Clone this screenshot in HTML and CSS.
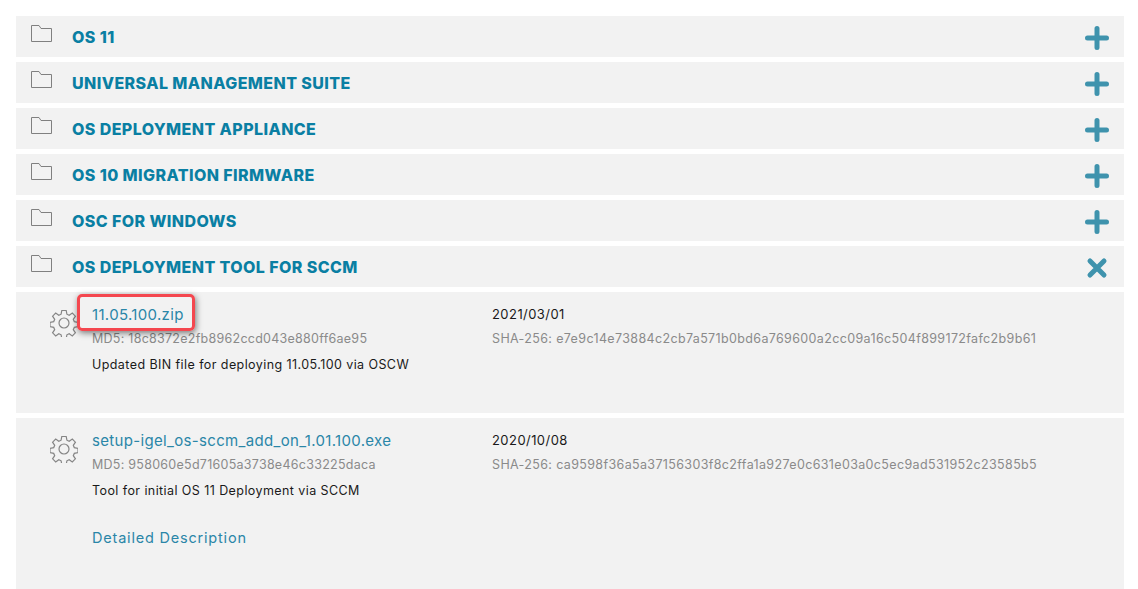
FILE: index.html
```html
<!DOCTYPE html>
<html lang="en">
<head>
<meta charset="utf-8">
<title>Downloads</title>
<link rel="stylesheet" href="styles.css">
</head>
<body>
<main class="list">
  <div class="row"><svg class="folder" viewBox="0 0 21 17"><path d="M.5 16.500V.5h7.500l2 3h10.500v13z"/></svg><h3>OS 11</h3><svg class="toggle" viewBox="0 0 24 24"><path d="M12 2.500v19M2.500 12h19"/></svg></div>
  <div class="row"><svg class="folder" viewBox="0 0 21 17"><path d="M.5 16.500V.5h7.500l2 3h10.500v13z"/></svg><h3>UNIVERSAL MANAGEMENT SUITE</h3><svg class="toggle" viewBox="0 0 24 24"><path d="M12 2.500v19M2.500 12h19"/></svg></div>
  <div class="row"><svg class="folder" viewBox="0 0 21 17"><path d="M.5 16.500V.5h7.500l2 3h10.500v13z"/></svg><h3>OS DEPLOYMENT APPLIANCE</h3><svg class="toggle" viewBox="0 0 24 24"><path d="M12 2.500v19M2.500 12h19"/></svg></div>
  <div class="row"><svg class="folder" viewBox="0 0 21 17"><path d="M.5 16.500V.5h7.500l2 3h10.500v13z"/></svg><h3>OS 10 MIGRATION FIRMWARE</h3><svg class="toggle" viewBox="0 0 24 24"><path d="M12 2.500v19M2.500 12h19"/></svg></div>
  <div class="row"><svg class="folder" viewBox="0 0 21 17"><path d="M.5 16.500V.5h7.500l2 3h10.500v13z"/></svg><h3>OSC FOR WINDOWS</h3><svg class="toggle" viewBox="0 0 24 24"><path d="M12 2.500v19M2.500 12h19"/></svg></div>
  <div class="row"><svg class="folder" viewBox="0 0 21 17"><path d="M.5 16.500V.5h7.500l2 3h10.500v13z"/></svg><h3>OS DEPLOYMENT TOOL FOR SCCM</h3><svg class="toggle" viewBox="0 0 24 24"><path d="M5 5l14 14M19 5L5 19"/></svg></div>

  <section class="file file-short">
    <svg class="gear" viewBox="0 0 28 28"><circle cx="14" cy="14" r="5"/><path d="M11.800 1.500h4.400l.7 3.700 2.300 1 3.100-2.100 3.100 3.100-2.100 3.100 1 2.300 3.700.7v4.400l-3.700.7-1 2.300 2.100 3.100-3.100 3.100-3.100-2.100-2.300 1-.7 3.700h-4.400l-.7-3.700-2.300-1-3.100 2.100-3.100-3.100 2.100-3.100-1-2.300-3.700-.7v-4.400l3.700-.7 1-2.300-2.100-3.100 3.100-3.100 3.100 2.100 2.300-1z"/></svg>
    <div class="info">
      <a class="name" href="#">11.05.100.zip</a>
      <p class="hash">MD5: 18c8372e2fb8962ccd043e880ff6ae95</p>
      <p class="desc">Updated BIN file for deploying 11.05.100 via OSCW</p>
    </div>
    <div class="meta">
      <p class="date">2021/03/01</p>
      <p class="hash">SHA-256: e7e9c14e73884c2cb7a571b0bd6a769600a2cc09a16c504f899172fafc2b9b61</p>
    </div>
    <div class="callout"></div>
  </section>

  <section class="file file-tall">
    <svg class="gear" viewBox="0 0 28 28"><circle cx="14" cy="14" r="5"/><path d="M11.800 1.500h4.400l.7 3.700 2.300 1 3.100-2.100 3.100 3.100-2.100 3.100 1 2.300 3.700.7v4.400l-3.700.7-1 2.300 2.100 3.100-3.100 3.100-3.100-2.100-2.300 1-.7 3.700h-4.400l-.7-3.700-2.300-1-3.100 2.100-3.100-3.100 2.100-3.100-1-2.300-3.700-.7v-4.400l3.700-.7 1-2.300-2.100-3.100 3.100-3.100 3.100 2.100 2.300-1z"/></svg>
    <div class="info">
      <a class="name" href="#">setup-igel_os-sccm_add_on_1.01.100.exe</a>
      <p class="hash">MD5: 958060e5d71605a3738e46c33225daca</p>
      <p class="desc">Tool for initial OS 11 Deployment via SCCM</p>
      <a class="details" href="#">Detailed Description</a>
    </div>
    <div class="meta">
      <p class="date">2020/10/08</p>
      <p class="hash">SHA-256: ca9598f36a5a37156303f8c2ffa1a927e0c631e03a0c5ec9ad531952c23585b5</p>
    </div>
  </section>
</main>
</body>
</html>
```
FILE: styles.css
```css
* { box-sizing: border-box; }
html, body { margin: 0; background: #fff; }
body { font-family: Inter, "Liberation Sans", sans-serif; overflow: hidden; height: 589px; }
.list { display: flex; flex-direction: column; gap: 5px; padding: 16px 14px 0 16px; }
.row { height: 41px; background: #f2f2f2; display: flex; align-items: center; padding: 0 15px; }
.folder { width: 21px; height: 17px; fill: none; stroke: #808080; stroke-width: 1; margin: -6px 20px 0 0; flex: none; }
h3 { margin: 0; font-size: 16px; font-weight: 800; color: #0a7fa3; flex: 1; letter-spacing: .41px; }
.toggle { width: 24px; height: 24px; fill: none; stroke: #3f93ad; stroke-width: 5; stroke-linecap: round; flex: none; margin-top: 2px; }
.file { position: relative; background: #f2f2f2; display: grid; grid-template-columns: 76px 400px 1fr; padding-top: 14px; }
.file-short { height: 121px; }
.file-tall { height: 171px; }
.gear { width: 28px; height: 28px; fill: none; stroke: #858585; stroke-width: 1.200; margin: 3px 0 0 34px; }
.info, .meta { display: flex; flex-direction: column; align-items: flex-start; }
.name { font-size: 15px; line-height: 18px; color: #2a86a8; text-decoration: none; letter-spacing: .33px; }
p { margin: 0; }
.hash { font-size: 12.500px; line-height: 15px; color: #8a8a8a; margin-top: 7px; letter-spacing: .26px; }
.meta .hash { margin-top: 8px; letter-spacing: .36px; }
.desc { font-size: 12.500px; line-height: 15px; color: #1a1a1a; margin-top: 11px; letter-spacing: .42px; }
.date { font-size: 13px; line-height: 17px; color: #1a1a1a; letter-spacing: .44px; }
.details { font-size: 14.500px; line-height: 18px; color: #2a86a8; text-decoration: none; margin-top: 31px; letter-spacing: .8px; }
.callout { position: absolute; left: 61px; top: 2px; width: 118px; height: 37px; border: 3px solid #f4474f; border-radius: 5px; box-shadow: 1px 2px 6px rgba(0,0,0,.5); }
```
